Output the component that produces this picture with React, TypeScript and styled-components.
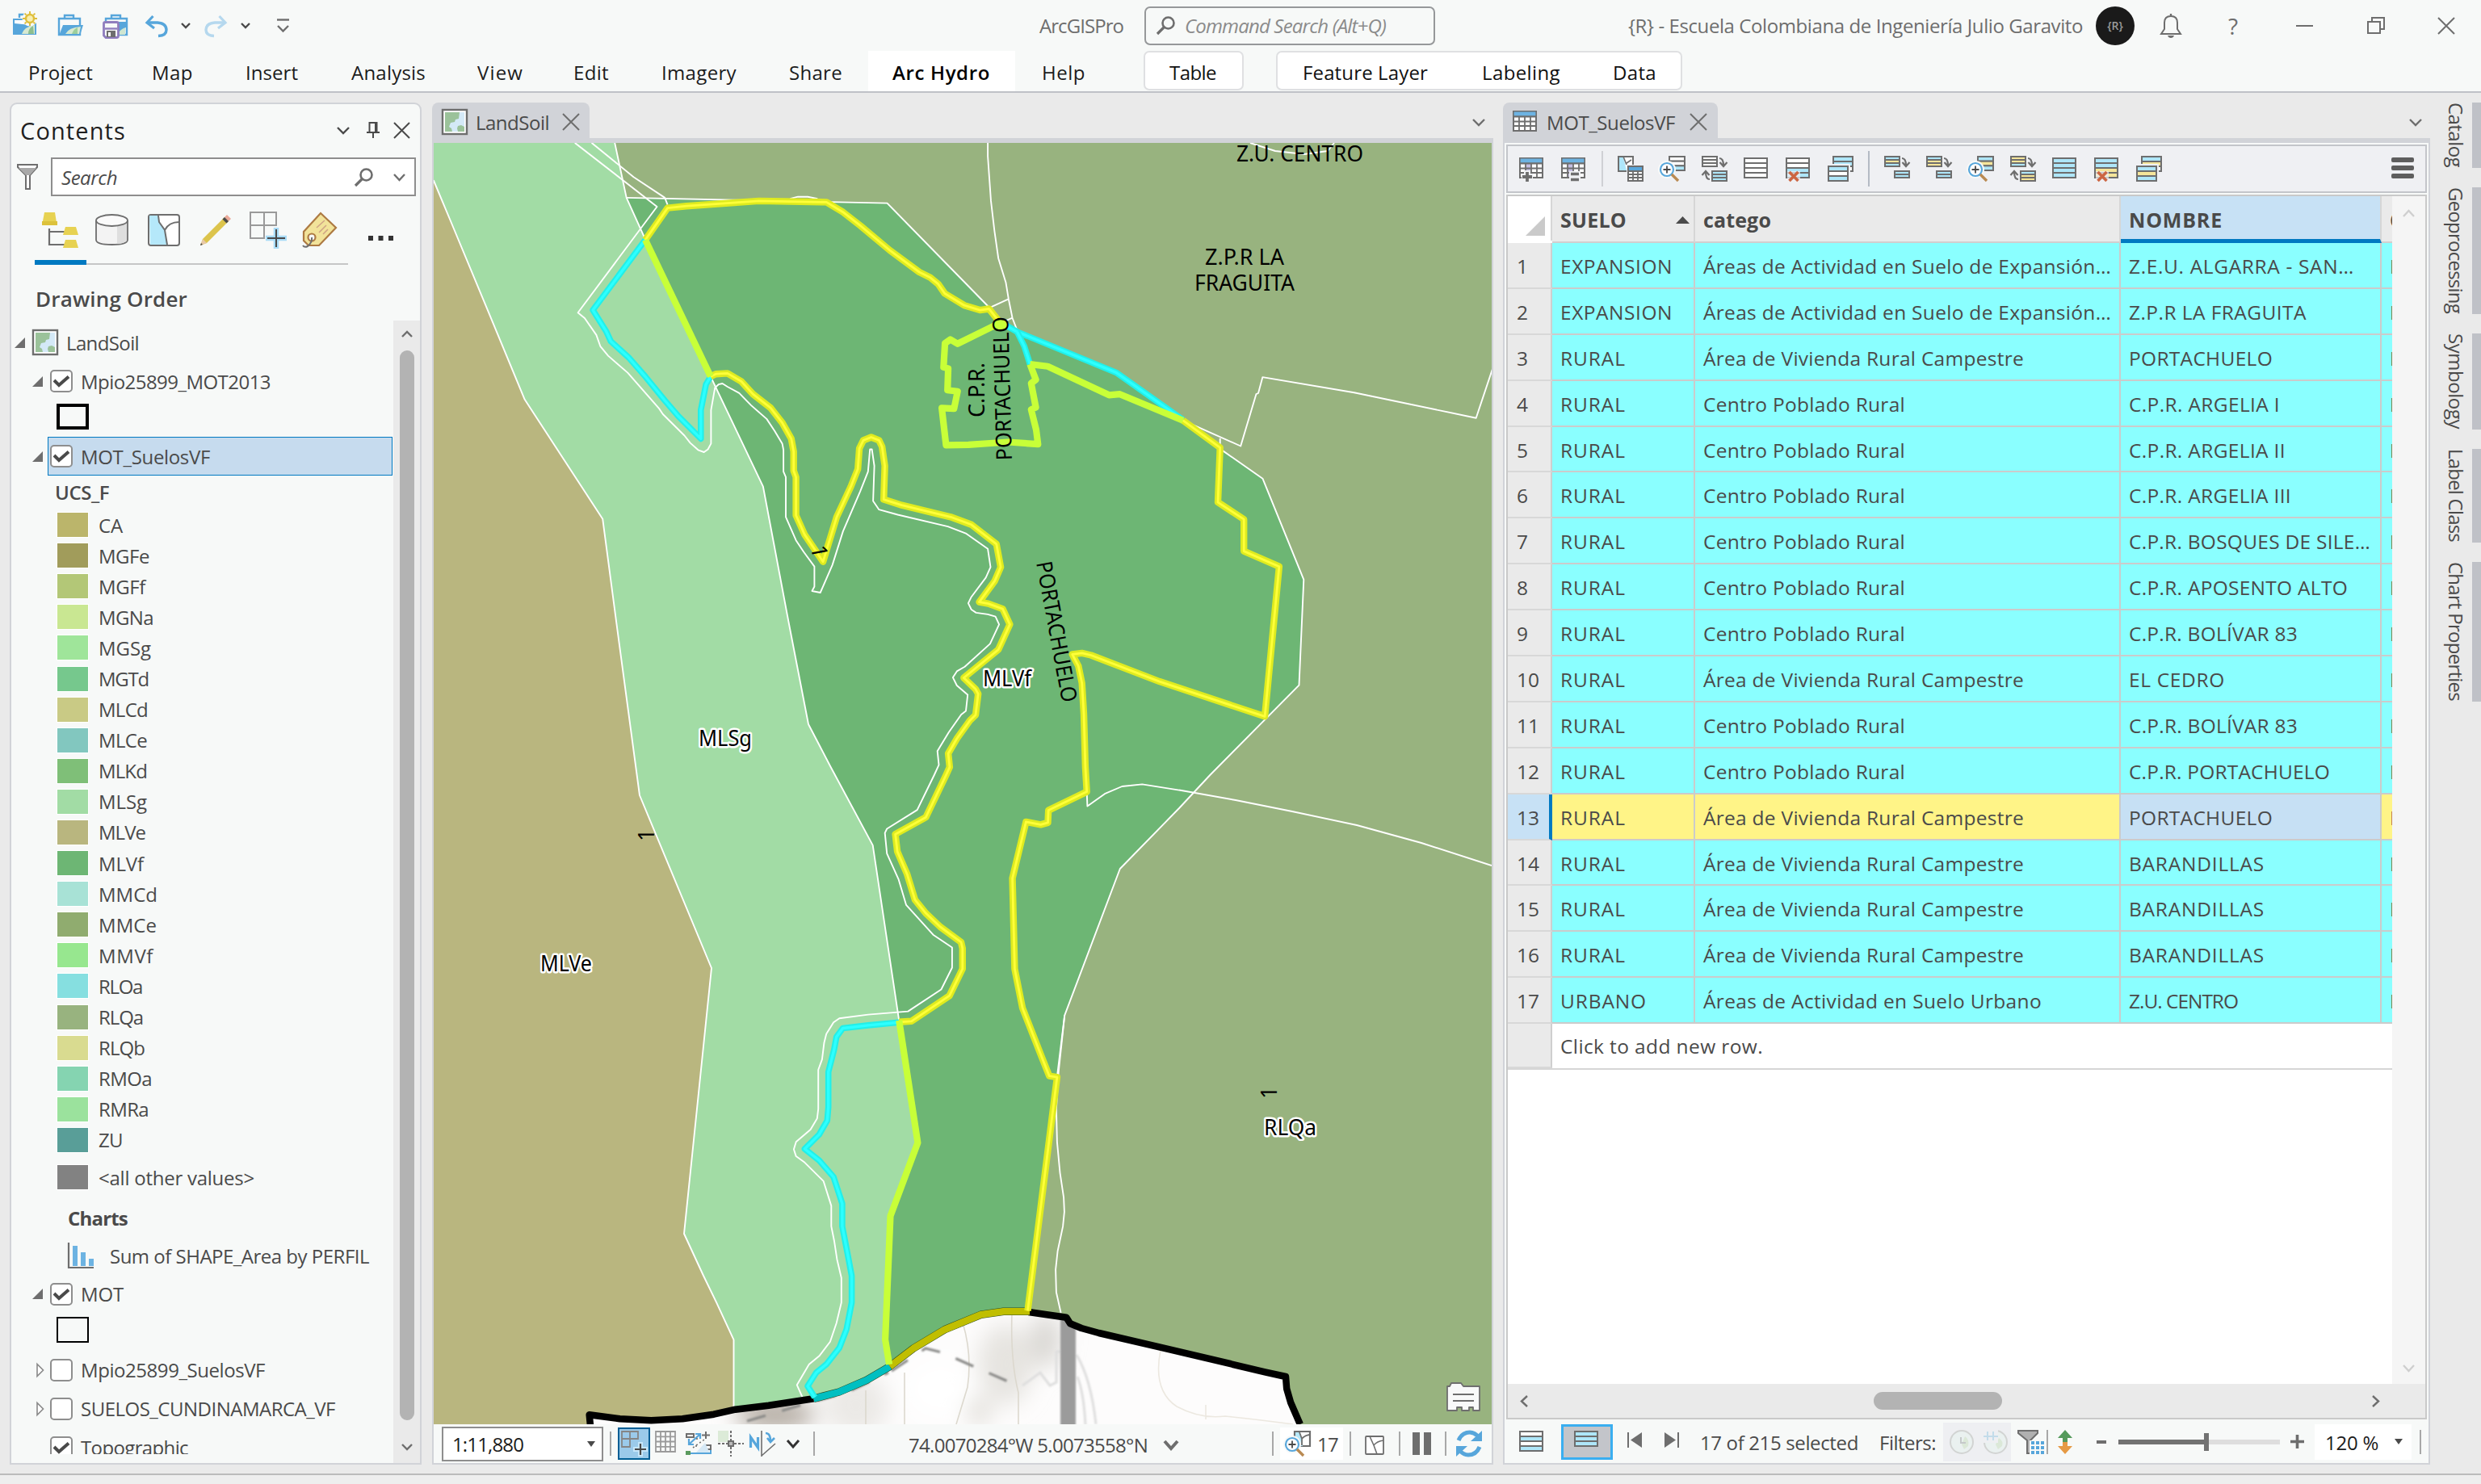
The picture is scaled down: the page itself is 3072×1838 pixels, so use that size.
import React, { useLayoutEffect, useRef } from "react";
import styled, { createGlobalStyle, css } from "styled-components";

const UI = `"Open Sans", "Noto Sans", sans-serif`;
const MAP_FONT = `"Noto Sans", "Open Sans", sans-serif`;
const INK = "#4a4a4a";
const GRAY = "#6e6e6e";
const EDGE = "#d1d3d8";
const PANEL = "#f7f9f8";

const GlobalStyle = createGlobalStyle`
  * { box-sizing: border-box; }
  body { margin: 0; background: #eaeaea; font-family: ${UI}; color: ${INK}; overflow: hidden; }
  svg { display: block; flex: none; overflow: visible; }
`;

/* ---------- fitted text ---------- */

const FitBox = styled.span<{ $w: number; $ml?: number; $vertical?: boolean; $size?: number; $weight?: number; $italic?: boolean; $color?: string; $dy?: number }>`
  flex: none;
  display: block;
  white-space: pre;
  ${(p) => (p.$vertical ? css`height: ${p.$w}px; writing-mode: vertical-rl;` : css`width: ${p.$w}px;`)}
  margin-left: ${(p) => p.$ml ?? 0}px;
  margin-top: ${(p) => p.$dy ?? 0}px;
  font-size: ${(p) => p.$size ?? 24}px;
  font-weight: ${(p) => p.$weight ?? 400};
  font-style: ${(p) => (p.$italic ? "italic" : "normal")};
  color: ${(p) => p.$color ?? "inherit"};
`;

type FitProps = {
  w: number; children: string; ml?: number; vertical?: boolean; size?: number;
  weight?: number; italic?: boolean; color?: string; dy?: number;
};

function Fit({ w, children, ml, vertical, size, weight, italic, color, dy }: FitProps) {
  const ref = useRef<HTMLSpanElement>(null);
  useLayoutEffect(() => {
    const el = ref.current;
    if (!el) return;
    el.style.letterSpacing = "0px";
    const r = el.getBoundingClientRect();
    const natural = vertical ? r.height : r.width;
    el.style.letterSpacing = `${(w - natural) / children.length}px`;
  }, [w, children, vertical]);
  return (
    <FitBox $w={w} $ml={ml} $vertical={vertical} $size={size} $weight={weight} $italic={italic} $color={color} $dy={dy}>
      <span ref={ref}>{children}</span>
    </FitBox>
  );
}

/* ---------- shell ---------- */

const Root = styled.div`
  width: 3072px; height: 1838px; display: flex; flex-direction: column; overflow: hidden; background: #eaeaea;
`;
const Header = styled.header`
  height: 115px; background: ${PANEL}; border-bottom: 2px solid #bfc1c7; display: flex; flex-direction: column; flex: none;
`;
const TitleBar = styled.div`
  height: 63px; display: flex; align-items: center; flex: none;
`;
const MenuBar = styled.nav`
  height: 50px; display: flex; align-items: stretch; color: #1c1c1c;
`;
const MenuItem = styled.div<{ $ml: number; $active?: boolean }>`
  margin-left: ${(p) => p.$ml}px; display: flex; align-items: center; padding-top: 3px;
  ${(p) => p.$active && css`background: #fff; padding-left: 30px; padding-right: 31px; color: #000;`}
`;
const MenuGroup = styled.div<{ $ml: number; $pad: string }>`
  margin-left: ${(p) => p.$ml}px; height: 49px; background: #fff; border: 2px solid #dfe0e2; border-radius: 7px;
  display: flex; align-items: center; padding: ${(p) => p.$pad}; color: #111;
`;
const At = styled.div<{ $ml: number; $mt?: number }>`
  margin-left: ${(p) => p.$ml}px; margin-top: ${(p) => p.$mt ?? 0}px; flex: none; display: flex; align-items: center;
`;
const CommandSearch = styled.div`
  margin-left: 26px; width: 360px; height: 48px; border: 2px solid #96989a; border-radius: 7px; display: flex; align-items: center;
  padding-left: 13px; flex: none;
`;
const Avatar = styled.div`
  margin-left: 16px; width: 48px; height: 48px; border-radius: 50%; background: #1a1a1a; color: #9a9a9a; font-size: 14px;
  display: flex; align-items: center; justify-content: center; flex: none; font-weight: 600;
`;
const Workspace = styled.main`
  height: 1710px; padding: 12px 0 0 12px; display: flex; align-items: flex-start; flex: none;
`;
const Footer = styled.footer`
  height: 13px; border-top: 2px solid #bcbcbc; background: #eeeeee;
`;

/* ---------- generic glyphs ---------- */

const Chevron = ({ w = 16, h = 8, c = GRAY, s = 2.4, dir = "down" }: { w?: number; h?: number; c?: string; s?: number; dir?: string }) => {
  const d =
    dir === "down" ? `M1 1L${w / 2} ${h - 1}L${w - 1} 1` :
    dir === "up" ? `M1 ${h - 1}L${w / 2} 1L${w - 1} ${h - 1}` :
    dir === "left" ? `M${w - 1} 1L1 ${h / 2}L${w - 1} ${h - 1}` : `M1 1L${w - 1} ${h / 2}L1 ${h - 1}`;
  return <svg width={w} height={h}><path d={d} fill="none" stroke={c} strokeWidth={s} /></svg>;
};
const Cross = ({ s = 20, c = GRAY, k = 2 }: { s?: number; c?: string; k?: number }) => (
  <svg width={s} height={s}><path d={`M0 0L${s} ${s}M${s} 0L0 ${s}`} stroke={c} strokeWidth={k} /></svg>
);
const Magnifier = ({ c = GRAY }: { c?: string }) => (
  <svg width="23" height="23"><circle cx="14.5" cy="8.5" r="7" fill="none" stroke={c} strokeWidth="2.6" /><path d="M9.5 13.5L1 22" stroke={c} strokeWidth="3.2" /></svg>
);
const MapThumb = () => (
  <svg width="32" height="32">
    <rect x="1" y="1" width="30" height="30" fill="#fff" stroke={GRAY} strokeWidth="2.4" />
    <rect x="4" y="4" width="24" height="24" fill="#9bc29a" />
    <path d="M22 4h6v18l-4-2-4 1-1 3 1 4h-7l-1-4-3-2 2-5 5-1 1-3 4-1z" fill="#d4e9f7" />
  </svg>
);

/* ---------- title bar icons ---------- */

const BLUE = "#57a6db";
const NewProject = () => (
  <svg width="32" height="32">
    <path d="M1 9h29v20H1z" fill={BLUE} /><path d="M3 11h20v6l-20-2z" fill="#fff" />
    <path d="M9 8V4h6" fill="none" stroke={BLUE} strokeWidth="2.4" />
    <path d="M12 28q3-9 16-11v11z" fill="#d7e9d0" /><path d="M20 28q0-7 6-10l1 10z" fill="#8dbf8f" />
    <circle cx="22" cy="9" r="9.5" fill={PANEL} /><circle cx="22" cy="9" r="5" fill="#f8eeb0" stroke="#dfbf3c" strokeWidth="2.4" />
    <path d="M22 0v3M22 15v3M13 9h3M28 9h3M15.6 2.6l2 2M26.4 13.4l2 2M28.4 2.6l-2 2M17.6 13.4l-2 2" stroke="#dfbf3c" strokeWidth="2" />
  </svg>
);
const OpenProject = () => (
  <svg width="32" height="28">
    <path d="M2 6h26v20H2z" fill={PANEL} stroke={BLUE} strokeWidth="2.4" /><path d="M9 6V2h11v4" fill="none" stroke={BLUE} strokeWidth="2.4" />
    <path d="M2 27L7 14h25l-4 13z" fill={BLUE} /><path d="M10 25q4-8 19-9l-2 9z" fill="#d7e9d0" /><path d="M18 25q2-6 7-8v8z" fill="#9ccf9c" />
  </svg>
);
const SaveProject = () => (
  <svg width="32" height="31">
    <path d="M4 6h26v20H4z" fill={PANEL} stroke={BLUE} strokeWidth="2.4" /><path d="M11 6V2h11v4" fill="none" stroke={BLUE} strokeWidth="2.4" />
    <path d="M18 10h10v16H18z" fill="#cfe6d0" /><path d="M20 10h9v7q-5 1-9 6z" fill={BLUE} />
    <path d="M1.5 12q0-1.5 2-1.5h14q2 0 2 2v15q0 2-2 2H4l-2.5-2.500z" fill={PANEL} stroke="#8f7dbd" strokeWidth="2.8" />
    <path d="M3 18.5h15" stroke="#8f7dbd" strokeWidth="2.4" /><path d="M5 21h11v8H5z" fill={GRAY} /><path d="M7 23h3v5H7z" fill="#fff" />
  </svg>
);
const Undo = ({ c, flip }: { c: string; flip?: boolean }) => (
  <svg width="28" height="27"><g transform={flip ? "translate(28 0) scale(-1 1)" : undefined}>
    <path d="M9.5 1L2 9l9 7" fill="none" stroke={c} strokeWidth="3.2" /><path d="M2 9h13q11 1 11 9 0 7-10 7.500" fill="none" stroke={c} strokeWidth="3.4" />
  </g></svg>
);
const Bell = () => (
  <svg width="26" height="32"><path d="M1 26h24l-4-6V12q0-8-8-8t-8 8v8z" fill="none" stroke={GRAY} strokeWidth="2" /><path d="M13 4V1" stroke={GRAY} strokeWidth="2.4" /><path d="M9 28h8q-1 3-4 3t-4-3z" fill={GRAY} /></svg>
);
const Restore = () => (
  <svg width="22" height="21"><path d="M1 6h15v14H1z" fill="none" stroke={GRAY} strokeWidth="2" /><path d="M6 6V1h15v14h-5" fill="none" stroke={GRAY} strokeWidth="2" /></svg>
);

function TopHeader() {
  return (
    <Header>
      <TitleBar>
        <At $ml={15} $mt={-4}><NewProject /></At>
        <At $ml={24} $mt={-2}><OpenProject /></At>
        <At $ml={24} $mt={1}><SaveProject /></At>
        <At $ml={21} $mt={2}><Undo c={BLUE} /></At>
        <At $ml={16}><Chevron w={12} h={7} c={INK} /></At>
        <At $ml={17} $mt={2}><Undo c="#b5d8ee" flip /></At>
        <At $ml={17}><Chevron w={12} h={7} c={INK} /></At>
        <At $ml={33}>
          <svg width="15" height="17"><path d="M0 1.5h15" stroke={GRAY} strokeWidth="2.4" /><path d="M1 9l6.5 6.500L14 9" fill="none" stroke={GRAY} strokeWidth="2.4" /></svg>
        </At>
        <Fit w={104} ml={929} color={GRAY}>ArcGISPro</Fit>
        <CommandSearch><Magnifier /><Fit w={249} ml={12} italic color="#8b8b8b">Command Search (Alt+Q)</Fit></CommandSearch>
        <Fit w={563} ml={239} color={GRAY}>{"{R} - Escuela Colombiana de Ingeniería Julio Garavito"}</Fit>
        <Avatar>{"{R}"}</Avatar>
        <At $ml={32}><Bell /></At>
        <Fit w={15} ml={58} size={28} color={GRAY}>?</Fit>
        <At $ml={69}><svg width="21" height="2"><rect width="21" height="2" fill={GRAY} /></svg></At>
        <At $ml={67}><Restore /></At>
        <At $ml={66}><Cross s={20} /></At>
      </TitleBar>
      <MenuBar>
        <MenuItem $ml={35}><Fit w={80}>Project</Fit></MenuItem>
        <MenuItem $ml={73}><Fit w={51}>Map</Fit></MenuItem>
        <MenuItem $ml={65}><Fit w={65}>Insert</Fit></MenuItem>
        <MenuItem $ml={66}><Fit w={92}>Analysis</Fit></MenuItem>
        <MenuItem $ml={64}><Fit w={57}>View</Fit></MenuItem>
        <MenuItem $ml={62}><Fit w={44}>Edit</Fit></MenuItem>
        <MenuItem $ml={65}><Fit w={93}>Imagery</Fit></MenuItem>
        <MenuItem $ml={65}><Fit w={66}>Share</Fit></MenuItem>
        <MenuItem $ml={32} $active><Fit w={121} weight={600}>Arc Hydro</Fit></MenuItem>
        <MenuItem $ml={33}><Fit w={54}>Help</Fit></MenuItem>
        <MenuGroup $ml={72} $pad="3px 32px 0 30px"><Fit w={58}>Table</Fit></MenuGroup>
        <MenuGroup $ml={40} $pad="3px 30px 0 31px">
          <Fit w={155}>Feature Layer</Fit><Fit w={97} ml={67}>Labeling</Fit><Fit w={54} ml={65}>Data</Fit>
        </MenuGroup>
      </MenuBar>
    </Header>
  );
}

/* ---------- contents pane ---------- */

const ContentsPane = styled.section`
  width: 510px; height: 1687px; background: ${PANEL}; border: 2px solid ${EDGE}; border-radius: 9px 9px 0 0; display: flex; flex-direction: column; flex: none;
`;
const PaneTitle = styled.div`height: 66px; padding-left: 11px; padding-bottom: 2px; display: flex; align-items: center; color: #1f1f1f; flex: none;`;
const SearchRow = styled.div`height: 48px; display: flex; align-items: center; padding-left: 7px; flex: none;`;
const SearchField = styled.div`
  margin-left: 16px; width: 452px; height: 48px; background: #fff; border: 2px solid #8e8e8e; display: flex; align-items: center; padding-left: 11px;
`;
const ViewIcons = styled.div`height: 79px; display: flex; align-items: flex-end; padding-left: 38px; padding-bottom: 15px; flex: none;`;
const ViewTabs = styled.div`
  margin-left: 29px; width: 388px; height: 6px; border-bottom: 2px solid #c6c6c6; flex: none; display: flex;
  &::before { content: ""; width: 64px; height: 6px; background: #0079c1; }
`;
const DrawingOrder = styled.div`height: 72px; padding: 12px 0 0 30px; display: flex; align-items: center; flex: none;`;
const TreeArea = styled.div`height: 1412px; display: flex; flex: none;`;
const Tree = styled.div`width: 473px; height: 1401px; overflow: hidden; flex: none;`;
const Row = styled.div<{ $h: number; $pl: number; $pb?: number }>`
  height: ${(p) => p.$h}px; padding-left: ${(p) => p.$pl}px; padding-bottom: ${(p) => p.$pb ?? 0}px; display: flex; align-items: center;
`;
const Selected = styled.div`
  margin-left: 6px; width: 427px; height: 48px; background: #c6dbee; border: 1px solid #0079c1; display: flex; align-items: center; padding-left: 2px;
`;
const Check = styled.span<{ $ml?: number }>`
  margin-left: ${(p) => p.$ml ?? 0}px; width: 28px; height: 28px; border: 2px solid #8e8e8e; border-radius: 5px; background: #fff; flex: none; display: flex; align-items: center; justify-content: center;
`;
const Swatch = styled.span<{ $c: string }>`
  width: 40px; height: 32px; border: 1px solid #fff; flex: none; background: ${(p) => p.$c}; background-clip: padding-box;
`;
const OutlineSwatch = styled.span<{ $b: number }>`width: 40px; height: 32px; border: ${(p) => p.$b}px solid #000; flex: none;`;
const VScroll = styled.div`
  width: 33px; height: 1415px; margin-top: -3px; background: #eaeaea; display: flex; flex-direction: column; align-items: center; flex: none;
`;
const VThumb = styled.div`width: 18px; height: 1325px; border-radius: 9px; background: #b3b3b3; margin: 16px 0 29px;`;

const Tick = () => <svg width="20" height="14"><path d="M1 6L7 12L19 1.5" fill="none" stroke={INK} strokeWidth="4" /></svg>;
const Open = () => <svg width="13" height="13"><path d="M13 0v13H0z" fill={GRAY} /></svg>;
const Closed = () => <svg width="9" height="18"><path d="M1 1.5v15L8.5 9z" fill="#fff" stroke="#8a8a8a" strokeWidth="1.6" /></svg>;

const LEGEND: [string, string, number][] = [
  ["CA", "#bbb56b", 30], ["MGFe", "#a19c5b", 63], ["MGFf", "#b3c777", 58], ["MGNa", "#c9e792", 68], ["MGSg", "#9fe59a", 65],
  ["MGTd", "#76c88d", 62], ["MLCd", "#c9ca85", 61], ["MLCe", "#82c7bf", 60], ["MLKd", "#7fbf78", 60], ["MLSg", "#a2dca5", 60],
  ["MLVe", "#b9b67f", 58], ["MLVf", "#6db674", 56], ["MMCd", "#a8e2d6", 73], ["MMCe", "#90ac6f", 72], ["MMVf", "#97e78f", 68],
  ["RLOa", "#86dfe0", 54], ["RLQa", "#98b37f", 55], ["RLQb", "#d9db90", 57], ["RMOa", "#85d4b1", 66], ["RMRa", "#9be29d", 62], ["ZU", "#599e98", 30],
];

const ContentIcons = () => (
  <ViewIcons>
    <svg width="46" height="44">
      <path d="M9 20v20h20M9 24h20" fill="none" stroke={GRAY} strokeWidth="2.2" />
      <path d="M3 0h13l2.5 16H0z" fill="#e7d252" /><path d="M0 11h19v5H0z" fill="#dcc23c" />
      <path d="M29 18h13l3 10H26zM29 34h13l3 10H26z" fill="#e7d252" />
    </svg>
    <At $ml={20}><svg width="41" height="44">
      <path d="M1 11v23q0 6 19.5 6T40 34V11z" fill="#f3f3f3" stroke={GRAY} strokeWidth="1.8" /><path d="M27 17l12-3v21q-4 4-12 4z" fill="#dedede" />
      <ellipse cx="20.5" cy="10" rx="19.5" ry="7" fill="#fafafa" stroke={GRAY} strokeWidth="1.8" />
    </svg></At>
    <At $ml={24}><svg width="40" height="44">
      <rect x="1" y="3" width="38" height="38" rx="3" fill="#fff" stroke={GRAY} strokeWidth="2" />
      <path d="M2 4h11l1 8 7 10 2 14 2 4H3z" fill="#b5e8fa" /><path d="M13 4l1 8 7 10 3 18M21 22q5-10 18-10" fill="none" stroke={GRAY} strokeWidth="2" />
    </svg></At>
    <At $ml={24}><svg width="40" height="44">
      <path d="M1 41l3-8L31 6l5 5L9 38z" fill="#dcc44c" /><path d="M1 41l3-8 5 5z" fill="#e8c9a8" /><path d="M1 41l1-3 2 2z" fill={INK} />
      <path d="M31 6l3-3 5 5-3 3z" fill="#eba999" /><path d="M28.5 8.5l2.5-2.5 5 5-2.500 2.500z" fill={INK} />
    </svg></At>
    <At $ml={22}><svg width="46" height="44">
      <path d="M1 0h32v16H1zM1 16h17v16H1zM18 0v32" fill="none" stroke="#9a9a9a" strokeWidth="2" />
      <path d="M33 19v26M20 32h26" stroke="#a9dcf7" strokeWidth="6.5" /><path d="M33 21v22M22 32h22" stroke={INK} strokeWidth="2" />
    </svg></At>
    <At $ml={19}><svg width="43" height="44">
      <path d="M23 1l19 18L21 41H8l-6-6V24z" fill="#f2e39a" stroke="#ad7a43" strokeWidth="2.2" /><path d="M18 19l10-9M21 25l9-9M26 27l6-6" stroke="#d0a585" strokeWidth="1.6" />
      <circle cx="12" cy="31" r="4.5" fill={PANEL} stroke="#ad7a43" strokeWidth="2.2" /><path d="M12 31q1 6-5 11-4 2-6-1" fill="none" stroke={GRAY} strokeWidth="2" />
    </svg></At>
    <At $ml={39}><svg width="31" height="22"><path d="M0 7h6v6H0zM12.5 7h6v6h-6zM25 7h6v6h-6z" fill="#333" /></svg></At>
  </ViewIcons>
);

function Contents() {
  return (
    <ContentsPane>
      <PaneTitle>
        <Fit w={131} size={29}>Contents</Fit>
        <At $ml={261}><Chevron w={16} h={9} c={INK} /></At>
        <At $ml={21}><svg width="16" height="20"><path d="M3.5 13V1h9v12M0 13h16M8 13v7M11 1v12" fill="none" stroke={INK} strokeWidth="2" /></svg></At>
        <At $ml={18}><Cross s={19} c={INK} /></At>
      </PaneTitle>
      <SearchRow>
        <svg width="26" height="32"><path d="M1 1h24v3L16 14v17h-5V14L1 4z" fill="#fff" stroke={GRAY} strokeWidth="2" /><path d="M2 5h22l-8 9h-5z" fill="#a9a9a9" /></svg>
        <SearchField><Fit w={69} italic>Search</Fit><At $ml={294}><Magnifier /></At><At $ml={25}><Chevron w={15} h={9} /></At></SearchField>
      </SearchRow>
      <ContentIcons />
      <ViewTabs />
      <DrawingOrder><Fit w={188} size={26} weight={600}>Drawing Order</Fit></DrawingOrder>
      <TreeArea>
        <Tree>
          <Row $h={48} $pl={4}><Open /><At $ml={9}><MapThumb /></At><Fit w={90} ml={10}>LandSoil</Fit></Row>
          <Row $h={48} $pl={26}><Open /><Check $ml={9}><Tick /></Check><Fit w={235} ml={10}>Mpio25899_MOT2013</Fit></Row>
          <Row $h={45} $pl={56} $pb={5}><OutlineSwatch $b={4} /></Row>
          <Row $h={48} $pl={26}><Open /><Selected><Check><Tick /></Check><Fit w={160} ml={10}>MOT_SuelosVF</Fit></Selected></Row>
          <Row $h={42} $pl={54} $pb={2}><Fit w={67} weight={600}>UCS_F</Fit></Row>
          {LEGEND.map(([name, c, w]) => (
            <Row key={name} $h={38.1} $pl={56}><Swatch $c={c} /><Fit w={w} ml={12}>{name}</Fit></Row>
          ))}
          <Row $h={54} $pl={56}><Swatch $c="#828282" /><Fit w={193} ml={12} dy={2}>{"<all other values>"}</Fit></Row>
          <Row $h={47} $pl={70}><Fit w={74} weight={700}>Charts</Fit></Row>
          <Row $h={47} $pl={70}>
            <svg width="32" height="32"><path d="M1 0v31h31" fill="none" stroke={GRAY} strokeWidth="2.2" /><path d="M6 4h6v25H6zM16 12h6v17h-6zM26 20h6v9h-6z" fill="#6db3e2" /></svg>
            <Fit w={321} ml={20}>Sum of SHAPE_Area by PERFIL</Fit>
          </Row>
          <Row $h={48} $pl={26}><Open /><Check $ml={9}><Tick /></Check><Fit w={53} ml={10}>MOT</Fit></Row>
          <Row $h={46} $pl={56} $pb={6}><OutlineSwatch $b={2} /></Row>
          <Row $h={48} $pl={31}><Closed /><Check $ml={8} /><Fit w={228} ml={10}>Mpio25899_SuelosVF</Fit></Row>
          <Row $h={48} $pl={31}><Closed /><Check $ml={8} /><Fit w={315} ml={10}>SUELOS_CUNDINAMARCA_VF</Fit></Row>
          <Row $h={48} $pl={48}><Check><Tick /></Check><Fit w={133} ml={10}>Topographic</Fit></Row>
        </Tree>
        <VScroll>
          <At $ml={0} $mt={13}><Chevron dir="up" w={14} h={8} /></At><VThumb /><Chevron w={14} h={8} />
        </VScroll>
      </TreeArea>
    </ContentsPane>
  );
}

/* ---------- map view ---------- */

type Pt = [number, number];
type Sheet = [number, number, number, number];
const NW: Sheet = [530, 150, 760 / 1568, 620 / 1568];
const NE: Sheet = [1150, 360, 700 / 1568, 600 / 1568];
const MID: Sheet = [900, 950, 560 / 1568, 800 / 1568];
const SW: Sheet = [530, 1580, 760 / 1568, 1 / 3];
const SE: Sheet = [1250, 1580, 620 / 1568, 1 / 3];
const ABS: Sheet = [0, 0, 1, 1];

/* Turns a sheet's flat "x y x y" list into map points. */
const on = (s: Sheet, list: string): Pt[] => {
  const n = list.trim().split(/[\s,]+/).map(Number);
  const out: Pt[] = [];
  for (let i = 0; i < n.length; i += 2) out.push([s[0] + n[i] * s[2], s[1] + n[i + 1] * s[3]]);
  return out;
};
const str = (...parts: Pt[][]) => parts.flat().map(([x, y]) => `${x.toFixed(1)},${y.toFixed(1)}`).join(" ");

const westEdge = [...on(NW, "14 185 60 320 155 600 247 872 446 1246 481 1568"), ...on(ABS, "792 985 881 1199 847 1528 871 1580"), ...on(SW, "737 100 781 238 781 495")];
const soilEdge = [...on(NW, "477 68 507 240 555 370 722 800 856 1145 921 1568"), ...on(ABS, "1001 897"), ...on(MID, "360 0 506 190 597 615 662 912 567 1088 549 1390 563 1450")];
const eastEdge = [...on(NW, "507 240 1173 257 1433 583 1462 632"), ...on(NE, "245 130 520 263 705 420 808 512 926 608 1040 935 1027 1277 780 1568"), ...on(MID, "1568 100 1363 247 1171 603 1145 752")];
const bottomW = on(SW, "412 517 490 532 570 538 650 532 730 515 785 497 870 482 985 457");
const bottomTeal = on(SW, "985 457 1050 432 1120 388 1180 337");
const bottomGold = on(SW, "1180 337 1240 270 1320 200 1412 145 1470 133 1537 133");
const bottomE = on(SE, "60 135 178 155 190 178 225 195 280 213 480 268 800 358 865 375 868 420 880 470 910 552");

const roadWest = [
  ...on(NW, "375 68 585 268 383 600 400 617 430 670 440 705 460 735 510 788 590 900 600 918 655 985 670 1008 690 1030 705 1037 715 1028 723 1010 723 905 733 835 742 825 752 822 765 832 795 852 825 890 865 933 885 970 905 1010 908 1030 908 1098 914 1115 914 1240 940 1313 960 1350 987 1395 987 1458 981 1472 1002 1477 1033 1390 1060 1285 1104 1160 1124 1098 1129 1028 1134 1028 1140 1080 1137 1190 1152 1217 1200 1233 1328 1270 1375 1292 1430 1340 1437 1397 1425 1430 1388 1490 1380 1510 1388 1530 1400 1540 1430 1545"),
  ...on(NE, "185 1055 195 1080 170 1143 100 1217 78 1232 67 1252 78 1278 108 1308 103 1360 90 1372 55 1430 24 1490 28 1535 15 1568"),
  ...on(MID, "660 104 555 150 548 160 555 210 595 272 622 335 715 407 781 438 781 487 743 540 628 593 490 601 390 610 370 620 345 648 337 670 330 710 317 735 317 830 313 853 290 880 240 910 232 928 240 945 270 960 335 1005 362 1065 362 1115 372 1150 382 1195 397 1240 397 1300 380 1350 358 1395 320 1430 285 1450 243 1500 262 1530"),
];
const whiteLines: Pt[][] = [
  westEdge, soilEdge, eastEdge, roadWest,
  on(NW, "418 68 525 175 605 240 612 262"),
  on(NW, "925 243 945 237 970 237 995 243"),
  on(NW, "1430 68 1430 110 1438 250 1447 345 1457 430 1476 505 1483 557 1493 617 1508 665"),
  on(NE, "165 57 220 28"), on(NE, "205 102 232 88"),
  on(NE, "705 420 865 503 908 335 914 332 926 280 1180 330 1518 412 1563 255"),
  on(NE, "808 478 808 510"),
  on(MID, "1248 60 1250 95 1310 65 1370 47 1440 42 1568 56"),
  on(ABS, "1460 978.5 1530 991 1600 1005 1680 1022 1760 1044 1847 1072"),
  on(MID, "1171 603 1150 740 1142 830 1145 910 1155 985 1168 1045 1170 1080 1165 1115 1147 1175 1140 1220 1142 1275 1158 1325"),
  on(ABS, "1548 177 1579 187 1615 191 1644 187 1652 177"),
];
const yellow: Pt[][] = [
  on(NW, "555 372 612 272 660 266 845 250 1018 254 1060 285 1105 328 1180 405 1255 473 1283 490 1303 510 1320 540 1370 577 1410 592 1433 588 1462 632"),
  [
    ...on(NW, "722 800 735 792 765 790 800 815 830 855 875 898 905 945 928 995 934 1035 934 1095 940 1115 940 1235 962 1295 1009 1380 1044 1240 1080 1145 1098 1090 1102 1025 1112 1000 1132 990 1152 1000 1160 1020 1167 1080 1164 1185 1210 1203 1335 1240 1388 1264 1452 1325 1463 1397 1448 1440"),
    ...on(NE, "140 1008 165 1013 205 1030 225 1080 193 1162 97 1253 130 1290 137 1305 130 1373 115 1390 78 1450 54 1498 58 1542 48 1568"),
    ...on(MID, "690 122 584 163 591 205 625 260 652 322 690 355 740 388 812 425 817 440 817 490 772 555 640 617 597 619"),
  ],
  [
    ...on(NE, "705 420 808 508 802 685 874 740 874 843 972 893 932 1378 640 1265 450 1180 425 1173 398 1177 415 1215 425 1270 430 1370"),
    ...on(MID, "1243 0 1248 60 1115 105 1113 135 1088 140 1037 133 990 270 998 490 1025 585 1095 710 1118 750 1145 753 1043 1320"),
  ],
];
const lime: Pt[][] = [
  on(NW, "555 372 722 800"),
  on(MID, "597 615 662 912 567 1090 549 1390 563 1450"),
  on(NE, "281 238 330 245 500 338 530 335 705 420"),
  on(NE, "200 103 80 172 60 158 45 170 41 248 54 252 52 322 80 326 70 382 36 380 48 500 110 499 220 490 303 497 298 450 284 385 297 378 284 300 297 288 281 238"),
];
const cyan: Pt[][] = [
  on(NW, "555 372 421 592 455 658 467 690 512 740 555 800 605 875 640 925 697 995 697 905 710 825 722 800"),
  on(MID, "597 620 490 627 402 634 380 655 372 685 352 740 352 825 348 858 320 892 270 927 320 955 370 995 400 1060 400 1115 418 1180 433 1235 433 1300 415 1365 390 1410 345 1450 310 1470 280 1503 305 1530"),
  on(NE, "200 103 245 133 520 265 705 418"),
  on(NE, "245 133 265 180 281 238"),
];

const Line = styled.polyline<{ $c: string; $w: number }>`
  fill: none; stroke: ${(p) => p.$c}; stroke-width: ${(p) => p.$w}px; stroke-linejoin: round; stroke-linecap: butt;
`;
const MapText = styled.text<{ $halo?: boolean }>`
  font-family: ${MAP_FONT}; font-size: 27px; fill: #000;
  ${(p) => p.$halo && css`stroke: #fff; stroke-width: 5px; paint-order: stroke; stroke-linejoin: round;`}
`;
const Canvas = styled.svg`&& { overflow: hidden; }`;
const GLYPHS = "spacingAndGlyphs" as const;

const MapCanvas = () => (
  <Canvas width="1310" height="1587" viewBox="537 177 1310 1587">
    <defs>
      <filter id="soft" x="-30%" y="-30%" width="160%" height="160%"><feGaussianBlur stdDeviation="14" /></filter>
      <filter id="faint"><feGaussianBlur stdDeviation="1" /></filter>
      <clipPath id="town"><polygon points={str(bottomW, bottomTeal, bottomGold, bottomE, on(ABS, "1610 1770 730 1770"))} /></clipPath>
    </defs>
    <rect x="537" y="177" width="1310" height="1587" fill="#98b37f" />
    <polygon points={str(on(ABS, "530 170"), on(NW, "477 68"), soilEdge, on(ABS, "1040 1764 537 1764"))} fill="#a2dca5" />
    <polygon points={str(westEdge, on(ABS, "909 1770 530 1770"))} fill="#b9b67f" />
    <polygon points={str(eastEdge, on(MID, "1043 1320 1150 1568 563 1568"), [...soilEdge].reverse().slice(0, -1))} fill="#6db674" />
    <g clipPath="url(#town)">
      <rect x="700" y="1600" width="1000" height="170" fill="#fdfcfc" />
      <g filter="url(#soft)">
        <ellipse cx="960" cy="1752" rx="50" ry="20" fill="#b5ada4" /><ellipse cx="1060" cy="1740" rx="40" ry="40" fill="#ebe9e6" />
        <ellipse cx="1245" cy="1690" rx="34" ry="50" fill="#e6e4e0" /><ellipse cx="1295" cy="1660" rx="20" ry="34" fill="#dad8d4" />
        <ellipse cx="1165" cy="1720" rx="45" ry="38" fill="#ffffff" /><ellipse cx="1212" cy="1748" rx="14" ry="18" fill="#dfdcd6" />
      </g>
      <g fill="none" stroke="#dcd8ce" strokeWidth="1.6">
        <path d="M1072 1764V1722M1120 1764V1700M1192 1638q12 40 6 80l-14 46M1253 1625q-2 60 8 100v40" />
        <path d="M1437 1672q-10 50 20 70 30 16 60 12 40 4 84 10M1493 1740v18" stroke="#ece8e0" />
      </g>
      <g filter="url(#faint)">
        <path d="M1333 1678q18 30 24 86M1334 1705q8 20 10 60M1266 1716l22-16 12 16 8-4v-38h8" fill="none" stroke="#dedede" strokeWidth="3" />
        <path d="M1104 1698L1146 1670L1166 1675L1255 1714" fill="none" stroke="#8a8a88" strokeWidth="3.2" strokeDasharray="24 21" />
        <path d="M925 1760L1000 1738L1050 1724L1100 1700" fill="none" stroke="#8a8a88" strokeWidth="3.2" strokeDasharray="24 21" />
        <path d="M1313 1630h19v140h-19z" fill="#9b9b9b" />
      </g>
    </g>
    {whiteLines.map((l, i) => <Line key={i} points={str(l)} $c="#fff" $w={1.9} />)}
    <Line points={str(on(SW, "415 560"), bottomW)} $c="#000" $w={8.5} />
    <Line points={str(bottomTeal, bottomGold)} $c="#2a4a20" $w={9.5} />
    <Line points={str(bottomE)} $c="#000" $w={8.5} />
    <Line points={str(bottomTeal)} $c="#00bfc1" $w={8.5} />
    <Line points={str(bottomGold)} $c="#c0be00" $w={8.5} />
    {cyan.map((l, i) => <React.Fragment key={i}><Line points={str(l)} $c="#22efe8" $w={7.6} /><Line points={str(l)} $c="#2dffff" $w={3.4} /></React.Fragment>)}
    {yellow.map((l, i) => <React.Fragment key={i}><Line points={str(l)} $c="#dfeb1f" $w={8.4} /><Line points={str(l)} $c="#ffff3a" $w={2.8} /></React.Fragment>)}
    {lime.map((l, i) => <Line key={i} points={str(l)} $c="#c8ff38" $w={8.2} />)}
    <MapText x="1531" y="200" textLength="157" lengthAdjust={GLYPHS}>Z.U. CENTRO</MapText>
    <MapText x="1492" y="328" textLength="98" lengthAdjust={GLYPHS}>Z.P.R LA</MapText>
    <MapText x="1479" y="360" textLength="124" lengthAdjust={GLYPHS}>FRAGUITA</MapText>
    <MapText transform="translate(1219 517) rotate(-90)" textLength="68" lengthAdjust={GLYPHS}>C.P.R.</MapText>
    <circle cx="1239" cy="402" r="8" fill="#c8ff38" />
    <MapText transform="translate(1253 570) rotate(-91.5)" textLength="178" lengthAdjust={GLYPHS}>PORTACHUELO</MapText>
    <MapText transform="translate(1283 697) rotate(79.5)" textLength="177" lengthAdjust={GLYPHS}>PORTACHUELO</MapText>
    <MapText transform="translate(1004 677) rotate(80)">1</MapText>
    <MapText transform="translate(810 1042) rotate(-90)">1</MapText>
    <MapText transform="translate(1581 1361) rotate(-90)">1</MapText>
    <MapText $halo x="1217" y="850" textLength="60" lengthAdjust={GLYPHS}>MLVf</MapText>
    <MapText $halo x="865" y="924" textLength="66" lengthAdjust={GLYPHS}>MLSg</MapText>
    <MapText $halo x="669" y="1203" textLength="64" lengthAdjust={GLYPHS}>MLVe</MapText>
    <MapText $halo x="1565" y="1406" textLength="65" lengthAdjust={GLYPHS}>RLQa</MapText>
    <path d="M1792 1717h3l2-4h12l3 4h20v30h-8v-4h-5v4h-9v-4h-6v4h-12z" fill="#f8f9f9" stroke={GRAY} strokeWidth="1.8" strokeLinejoin="round" />
    <path d="M1799 1727h26M1799 1735h26" stroke={GRAY} strokeWidth="2" />
  </Canvas>
);

const View = styled.section<{ $w: number; $ml: number }>`
  width: ${(p) => p.$w}px; margin-left: ${(p) => p.$ml}px; height: 1687px; display: flex; flex-direction: column; flex: none;
`;
const TabStrip = styled.div`height: 50px; border-bottom: 6px solid ${EDGE}; display: flex; flex: none;`;
const Tab = styled.div<{ $w: number; $pl: number }>`
  width: ${(p) => p.$w}px; padding-left: ${(p) => p.$pl}px; height: 44px; background: ${EDGE}; border-radius: 8px 8px 0 0; display: flex; align-items: center; flex: none; padding-top: 4px;
`;
const TabMenu = styled.div<{ $ml: number }>`margin-left: ${(p) => p.$ml}px; margin-top: 20px;`;
const ViewBody = styled.div`
  flex: 1; border: 2px solid ${EDGE}; border-top: 0; background: ${PANEL}; display: flex; flex-direction: column;
`;
const StatusBar = styled.div`height: 48px; display: flex; align-items: center; flex: none;`;
const ScaleBox = styled.div`
  margin-left: 10px; width: 200px; height: 43px; border: 2px solid #8e8e8e; background: #fff; display: flex; align-items: center; padding-left: 11px; color: #1c1c1c;
`;
const Sep = styled.span<{ $ml: number; $h?: number; $c?: string }>`
  width: 2px; height: ${(p) => p.$h ?? 30}px; margin-left: ${(p) => p.$ml}px; background: ${(p) => p.$c ?? "#a8a8a8"}; flex: none;
`;
const ToggleOn = styled.div`
  margin-left: 8px; width: 40px; height: 40px; border: 2px solid #005e95; background: #9bcaea; display: flex; align-items: center; justify-content: center; flex: none;
`;
const WhiteBox = styled.div<{ $w: number; $h: number; $ml: number; $pl: number }>`
  margin-left: ${(p) => p.$ml}px; width: ${(p) => p.$w}px; height: ${(p) => p.$h}px; padding-left: ${(p) => p.$pl}px; background: #fff; display: flex; align-items: center; flex: none;
`;
const Down = () => <svg width="10" height="7"><path d="M0 0h10L5 7z" fill={INK} /></svg>;

const ZoomLens = () => (
  <g><circle cx="9" cy="17" r="11" fill={PANEL} /><circle cx="9" cy="17" r="8" fill="#fff" stroke={BLUE} strokeWidth="2.2" /><path d="M4.5 17h9M9 12.5v9" stroke={INK} strokeWidth="1.8" /><path d="M15 23l8 8" stroke="#b98a52" strokeWidth="3.4" /></g>
);

function MapView() {
  return (
    <View $w={1314} $ml={13}>
      <TabStrip>
        <Tab $w={195} $pl={12}><At $ml={0} $mt={-1}><MapThumb /></At><Fit w={91} ml={10}>LandSoil</Fit><At $ml={17} $mt={-1}><Cross s={20} /></At></Tab>
        <TabMenu $ml={1093}><Chevron w={16} h={9} /></TabMenu>
      </TabStrip>
      <ViewBody>
        <MapCanvas />
        <StatusBar>
          <ScaleBox><Fit w={88}>1:11,880</Fit><At $ml={79}><Down /></At></ScaleBox>
          <Sep $ml={8} />
          <ToggleOn><svg width="34" height="32"><path d="M2 1h20v9H2zM2 10h10v10H2zM12 1v19" fill="none" stroke="#858585" strokeWidth="1.8" /><path d="M25 14v18M16 23h18" stroke="#c6e6fa" strokeWidth="6" /><path d="M25 16v14M18 23h14" stroke={INK} strokeWidth="2.2" /></svg></ToggleOn>
          <At $ml={6} $mt={-6}><svg width="26" height="27"><path d="M1 1h24v25H1zM1 7.3h24M1 13.5h24M1 19.8h24M7 1v25M13 1v25M19 1v25" fill="none" stroke="#9b9b9b" strokeWidth="1.8" /></svg></At>
          <At $ml={12} $mt={-2}><svg width="32" height="29">
            <path d="M1 3h9v4H1zM23 17h8v5h-8z" fill="#fff" stroke={GRAY} strokeWidth="2" /><path d="M20 4.5h10M25 0v9" stroke={GRAY} strokeWidth="2" />
            <path d="M5 15L17 4M12 3h6v6M4 9v7h6" fill="none" stroke={BLUE} strokeWidth="2.2" /><path d="M12 27l12-13 6 13z" fill="#d5e8f5" /><path d="M3 27h28v-4" fill="none" stroke={BLUE} strokeWidth="2" />
            <path d="M0 24h6v5H0z" fill="#5a9a5e" /><path d="M9 20l14-10M14 8v3M13 17v3" stroke={GRAY} strokeWidth="1.6" strokeDasharray="2 3" />
          </svg></At>
          <At $ml={8}><svg width="32" height="32"><path d="M0 0h13v14H0z" fill="#dcebd8" /><path d="M16 0v32M0 16h32" stroke={GRAY} strokeWidth="2" strokeDasharray="3 2" /><path d="M13 13h6v6h-6z" fill="#bbb" stroke={GRAY} strokeWidth="2" /></svg></At>
          <At $ml={7}><svg width="32" height="32"><path d="M1.5 21V8L10.5 21V8" fill="none" stroke={BLUE} strokeWidth="3.2" /><path d="M15 0v32M15 31L32 16" fill="none" stroke={GRAY} strokeWidth="1.6" /><path d="M20 3q6 0 6 10M22 9l4 5 5-5" fill="none" stroke={BLUE} strokeWidth="2.6" /></svg></At>
          <At $ml={14}><Chevron w={16} h={10} c="#333" s={3} /></At>
          <Sep $ml={17} />
          <Fit w={296} ml={116} dy={3}>74.0070284°W 5.0073558°N</Fit>
          <At $ml={20} $mt={3}><Chevron w={18} h={11} s={4} /></At>
          <Sep $ml={116} />
          <WhiteBox $ml={8} $w={78} $h={40} $pl={6}>
            <svg width="32" height="32"><path d="M12 1h19v18H12z" fill="#fff" stroke={GRAY} strokeWidth="2.2" /><path d="M13 2h6l1 7 2 10h-9z" fill="#b5e8fa" /><path d="M18 2l3 8v8M21 10q3-4 9-5" fill="none" stroke={GRAY} strokeWidth="1.8" /><ZoomLens /></svg>
            <Fit w={26} ml={8}>17</Fit>
          </WhiteBox>
          <Sep $ml={8} />
          <At $ml={17} $mt={3}><svg width="24" height="24"><rect x="1" y="1" width="22" height="22" rx="1" fill="#fff" stroke={GRAY} strokeWidth="1.8" /><path d="M6 1l5 11 4 11M11 12q4-5 12-6" fill="none" stroke={GRAY} strokeWidth="1.6" /></svg></At>
          <Sep $ml={18} />
          <At $ml={15}><svg width="23" height="28"><path d="M0 0h9v28H0zM14 0h9v28h-9z" fill={GRAY} /></svg></At>
          <Sep $ml={17} />
          <At $ml={12}><svg width="32" height="32"><path d="M3 12Q7 2 17 2q6 0 11 6" fill="none" stroke={BLUE} strokeWidth="5" /><path d="M32 0v13H18z" fill={BLUE} /><path d="M29 20q-4 10-14 10-6 0-11-6" fill="none" stroke={BLUE} strokeWidth="5" /><path d="M0 32V19h14z" fill={BLUE} /></svg></At>
        </StatusBar>
      </ViewBody>
    </View>
  );
}

/* ---------- attribute table ---------- */

const A = "#aee6f9";
const Y = "#f5e59a";
const W = "#fff";
const Rows = ({ x = 1, y = 1, w = 28, h = 26, f }: { x?: number; y?: number; w?: number; h?: number; f: string[] }) => {
  const s = h / f.length;
  return (
    <g>
      {f.map((c, i) => <rect key={i} x={x} y={y + i * s} width={w} height={s} fill={c} stroke={GRAY} strokeWidth="2" />)}
    </g>
  );
};
const TableGlyph = ({ mark }: { mark?: string }) => (
  <svg width="30" height={mark ? 30 : 26}>
    <rect x="1" y="1" width="28" height="24" fill="#fff" stroke={GRAY} strokeWidth="2" /><path d="M1 1h28v6H1z" fill="#6db3e2" stroke={GRAY} strokeWidth="1.2" />
    {mark && <path d="M8 8h6v16H8z" fill="#c5bfe2" />}
    <path d="M1 7.5h28M1 13.5h28M1 19h28M8 7v18M15 7v18M22 7v18" stroke={GRAY} strokeWidth="1.8" />
    {mark === "plus" && <g><path d="M10 16v14M3 24h14" stroke="#eff0f3" strokeWidth="8" /><path d="M10 18v12M4 24h12" stroke={GRAY} strokeWidth="3.8" /></g>}
    {mark === "minus" && <g><path d="M10 17h14v14H10z" fill="#eff0f3" /><path d="M12 20.5h10M12 27.5h10" stroke={GRAY} strokeWidth="3.4" /></g>}
  </svg>
);
const CalcGlyph = () => (
  <svg width="32" height="32"><rect x="1" y="1" width="18" height="18" fill="#fff" stroke={GRAY} strokeWidth="2" /><path d="M2 2h5l2 8 2 8H2z" fill={A} /><path d="M7 1l4 10M11 9l6-4" stroke={GRAY} strokeWidth="1.6" />
    <rect x="11" y="11" width="21" height="21" fill="#eff0f3" /><rect x="13" y="13" width="18" height="18" fill="#fff" stroke={GRAY} strokeWidth="2" /><path d="M14 14h16v4H14z" fill="#57a6db" /><path d="M13 19h18M13 23h18M13 27h18M19 19v12M25 19v12" stroke={GRAY} strokeWidth="1.8" /></svg>
);
const ZoomRows = ({ f }: { f: string[] }) => <svg width="32" height="32"><Rows x={12} y={1} w={19} h={17} f={f} /><ZoomLens /></svg>;
const SwitchRows = ({ a, b, back }: { a: string[]; b: string[]; back?: boolean }) => (
  <svg width="32" height="32">
    <Rows x={1} y={1} w={18} h={12} f={a} />
    <path d="M22 3q5 0 5 9M22.5 8l4.5 5 4.5-5" fill="none" stroke={GRAY} strokeWidth="2.2" />
    {back ? <g><Rows x={13} y={19} w={18} h={12} f={b} /><path d="M10 29q-5 0-5-9M0.5 24L5 19l4.500 5" fill="none" stroke={GRAY} strokeWidth="2.2" /></g> : <Rows x={13} y={19} w={18} h={8} f={b} />}
  </svg>
);
const FullRows = ({ f, del }: { f: string[]; del?: boolean }) => (
  <svg width="30" height="30"><Rows y={3} h={24} f={f} />{del && <g><path d="M2 19h16v12H2z" fill="#eff0f3" opacity=".7" /><path d="M4.5 20l11 11M15.5 20l-11 11" stroke="#cc6642" strokeWidth="3.6" /></g>}</svg>
);
const StackRows = ({ c }: { c: string }) => (
  <svg width="32" height="32"><Rows x={7} y={1} w={24} h={18} f={[A, c === Y ? Y : A, W]} /><rect x="0" y="10" width="28" height="20" fill="#eff0f3" /><Rows x={1} y={13} w={24} h={18} f={[c === Y ? A : A, c === Y ? Y : W, A]} /></svg>
);

const Toolbar = styled.div`
  margin: 2px 2px 0; height: 60px; border: 2px solid #c3c5ca; background: #eff0f3; display: flex; align-items: center; flex: none; padding-left: 14px;
`;
const ToolSlot = styled.div<{ $w?: number }>`width: ${(p) => p.$w ?? 52}px; height: 32px; flex: none; padding-top: 0;`;
const GridBox = styled.div`
  margin: 2px 2px 0; height: 1517px; border: 2px solid #c9c9c9; background: #fff; display: flex; flex-direction: column; flex: none;
`;
const GridMain = styled.div`height: 1471px; display: flex; flex: none;`;
const Grid = styled.div`width: 1095px; overflow: hidden; flex: none;`;
const GridRow = styled.div`display: flex; height: 56.9px;`;
const HeadRow = styled.div`display: flex; height: 58px;`;
const Corner = styled.div`width: 55px; height: 55px; border-right: 2px solid #d6d6d6; padding: 25px 0 0 22px; background: #fff; flex: none;`;
const HeadCell = styled.div<{ $w: number; $on?: boolean }>`
  width: ${(p) => p.$w}px; height: 58px; flex: none; display: flex; align-items: center; padding-left: 10px; padding-top: ${(p) => (p.$on ? 5 : 2)}px; overflow: hidden;
  background: ${(p) => (p.$on ? "#c7e1f5" : "#eaeaea")}; border-right: 2px solid #d6d6d6;
  border-bottom: ${(p) => (p.$on ? "5px solid #0079c1" : "2px solid #d2cfcf")};
`;
const NumCell = styled.div<{ $on?: boolean }>`
  width: 55px; height: 100%; flex: none; background: ${(p) => (p.$on ? "#c7e1f5" : "#eaeaea")}; border-right: ${(p) => (p.$on ? "4px solid #0079c1" : "2px solid #cfcfcf")};
  border-bottom: 2px solid #d8d8d8; padding: 2px 0 0 11px; display: flex; align-items: center;
`;
const Cell = styled.div<{ $w: number; $c: string }>`
  width: ${(p) => p.$w}px; height: 100%; flex: none; background: ${(p) => p.$c}; border-right: 2px solid #cbcbcb; border-bottom: 2px solid #cbcbcb;
  padding: 2px 0 0 10px; display: flex; align-items: center; overflow: hidden;
`;
const AddRow = styled.div`height: 57px; display: flex; align-items: center; border-bottom: 2px solid #d6d6d6;`;
const GridVScroll = styled.div`width: 41px; background: #f5f5f5; display: flex; flex-direction: column; justify-content: space-between; align-items: center; padding: 17px 0 15px; flex: none;`;
const GridHScroll = styled.div`height: 42px; background: #eaeaea; display: flex; align-items: center; padding-left: 16px; flex: none;`;
const HThumb = styled.div`margin-left: 428px; width: 159px; height: 22px; border-radius: 11px; background: #b3b3b3;`;
const TableStatus = styled.div`height: 54px; display: flex; align-items: center; flex: none; padding-top: 1px;`;
const ViewToggle = styled.div`
  margin-left: 22px; width: 64px; height: 44px; background: #c3c5ca; border: 3px solid #3aaef0; display: flex; align-items: center; justify-content: center; flex: none;
`;
const DisabledGroup = styled.div`margin-left: 9px; width: 84px; height: 48px; background: #eeeff2; display: flex; align-items: center; padding-left: 8px; gap: 12px; flex: none;`;
const Track = styled.div`margin-left: 15px; width: 200px; height: 6px; background: linear-gradient(90deg, #727272 109px, #dedede 109px); flex: none; display: flex; align-items: center;`;
const Knob = styled.div`margin-left: 106px; width: 6px; height: 22px; background: #727272;`;

const AREAS = "Áreas de Actividad en Suelo de Expansión…";
const VIV = "Área de Vivienda Rural Campestre";
const CEN = "Centro Poblado Rural";
const widths: Record<string, number> = {
  EXPANSION: 139, RURAL: 81, URBANO: 107, [AREAS]: 505, [VIV]: 397, [CEN]: 250, "Áreas de Actividad en Suelo Urbano": 419,
  "Z.E.U. ALGARRA - SAN…": 279, "Z.P.R LA FRAGUITA": 220, PORTACHUELO: 178, "C.P.R. ARGELIA I": 187, "C.P.R. ARGELIA II": 194, "C.P.R. ARGELIA III": 201,
  "C.P.R. BOSQUES DE SILE…": 299, "C.P.R. APOSENTO ALTO": 271, "C.P.R. BOLÍVAR 83": 209, "EL CEDRO": 119, "C.P.R. PORTACHUELO": 249, BARANDILLAS: 168, "Z.U. CENTRO": 135,
};
const DATA: [string, string, string][] = [
  ["EXPANSION", AREAS, "Z.E.U. ALGARRA - SAN…"], ["EXPANSION", AREAS, "Z.P.R LA FRAGUITA"], ["RURAL", VIV, "PORTACHUELO"],
  ["RURAL", CEN, "C.P.R. ARGELIA I"], ["RURAL", CEN, "C.P.R. ARGELIA II"], ["RURAL", CEN, "C.P.R. ARGELIA III"], ["RURAL", CEN, "C.P.R. BOSQUES DE SILE…"],
  ["RURAL", CEN, "C.P.R. APOSENTO ALTO"], ["RURAL", CEN, "C.P.R. BOLÍVAR 83"], ["RURAL", VIV, "EL CEDRO"], ["RURAL", CEN, "C.P.R. BOLÍVAR 83"],
  ["RURAL", CEN, "C.P.R. PORTACHUELO"], ["RURAL", VIV, "PORTACHUELO"], ["RURAL", VIV, "BARANDILLAS"], ["RURAL", VIV, "BARANDILLAS"], ["RURAL", VIV, "BARANDILLAS"],
  ["URBANO", "Áreas de Actividad en Suelo Urbano", "Z.U. CENTRO"],
];

function TableView() {
  return (
    <View $w={1148} $ml={12}>
      <TabStrip>
        <Tab $w={266} $pl={12}><At $ml={0} $mt={-2}><TableGlyph /></At><Fit w={159} ml={12}>MOT_SuelosVF</Fit><At $ml={19} $mt={-1}><Cross s={20} /></At></Tab>
        <TabMenu $ml={856}><Chevron w={16} h={9} /></TabMenu>
      </TabStrip>
      <ViewBody>
        <Toolbar>
          <ToolSlot><At $ml={0} $mt={2}><TableGlyph mark="plus" /></At></ToolSlot>
          <ToolSlot $w={49}><At $ml={0} $mt={2}><TableGlyph mark="minus" /></At></ToolSlot>
          <Sep $ml={1} $h={44} $c="#cfd0d4" />
          <At $ml={18} />
          <ToolSlot><CalcGlyph /></ToolSlot>
          <ToolSlot><ZoomRows f={[W, W, A]} /></ToolSlot>
          <ToolSlot><SwitchRows a={[W, W, W]} b={[A, A, A]} back /></ToolSlot>
          <ToolSlot><FullRows f={[W, W, W, W]} /></ToolSlot>
          <ToolSlot><FullRows f={[W, W, A, A]} del /></ToolSlot>
          <ToolSlot $w={49}><StackRows c={A} /></ToolSlot>
          <Sep $ml={1} $h={44} $c="#b4bac4" />
          <At $ml={18} />
          <ToolSlot><SwitchRows a={[A, Y, A]} b={[A, A]} /></ToolSlot>
          <ToolSlot><SwitchRows a={[A, Y, Y]} b={[A, A]} /></ToolSlot>
          <ToolSlot><ZoomRows f={[A, Y, A]} /></ToolSlot>
          <ToolSlot><SwitchRows a={[Y, Y, A]} b={[A, Y, Y]} back /></ToolSlot>
          <ToolSlot><FullRows f={[A, A, A, A]} /></ToolSlot>
          <ToolSlot><FullRows f={[A, A, Y, Y]} del /></ToolSlot>
          <ToolSlot><StackRows c={Y} /></ToolSlot>
          <At $ml={264} $mt={-2}><svg width="28" height="26"><rect width="28" height="6" rx="2" fill="#5e5e5e" /><rect y="10" width="28" height="6" rx="2" fill="#5e5e5e" /><rect y="20" width="28" height="6" rx="2" fill="#5e5e5e" /></svg></At>
        </Toolbar>
        <GridBox>
          <GridMain>
            <Grid>
              <HeadRow>
                <Corner><svg width="24" height="24"><path d="M24 0v24H0z" fill="#cacaca" /></svg></Corner>
                <HeadCell $w={177}><Fit w={82} size={25} weight={700}>SUELO</Fit><At $ml={61}><svg width="17" height="9"><path d="M0 9L8.5 0 17 9z" fill={INK} /></svg></At></HeadCell>
                <HeadCell $w={527}><Fit w={84} size={25} weight={700}>catego</Fit></HeadCell>
                <HeadCell $w={323} $on><Fit w={116} size={25} weight={700}>NOMBRE</Fit></HeadCell>
                <HeadCell $w={323}><Fit w={18} size={25} weight={700}>C</Fit></HeadCell>
              </HeadRow>
              {DATA.map(([a, b, c], i) => {
                const current = i === 12;
                const bg = current ? "#fff487" : "#8affff";
                return (
                  <GridRow key={i}>
                    <NumCell $on={current}><Fit w={i > 8 ? 28 : 14} size={24.5}>{String(i + 1)}</Fit></NumCell>
                    <Cell $w={177} $c={bg}><Fit w={widths[a]} size={24.5}>{a}</Fit></Cell>
                    <Cell $w={527} $c={bg}><Fit w={widths[b]} size={24.5}>{b}</Fit></Cell>
                    <Cell $w={323} $c={current ? "#c6e0f4" : bg}><Fit w={widths[c]} size={24.5}>{c}</Fit></Cell>
                    <Cell $w={60} $c={bg}><Fit w={8} size={24.5}>I</Fit></Cell>
                  </GridRow>
                );
              })}
              <AddRow><NumCell /><Fit w={251} ml={10} size={24.5}>Click to add new row.</Fit></AddRow>
            </Grid>
            <GridVScroll><Chevron dir="up" w={15} h={9} c="#cfcfcf" /><Chevron w={15} h={9} c="#cfcfcf" /></GridVScroll>
          </GridMain>
          <GridHScroll>
            <Chevron dir="left" w={9} h={15} /><HThumb /><At $ml={458}><Chevron dir="right" w={9} h={15} /></At>
          </GridHScroll>
        </GridBox>
        <TableStatus>
          <At $ml={18} $mt={-1}><svg width="30" height="27"><Rows y={1} h={24} f={[W, A, W, A]} /></svg></At>
          <ViewToggle><At $ml={-2} $mt={-8}><svg width="30" height="20"><Rows y={1} h={18} f={[A, A, A]} /></svg></At></ViewToggle>
          <At $ml={18} $mt={-4}><svg width="19" height="19"><path d="M1 0v19" stroke={GRAY} strokeWidth="2" /><path d="M18 0v19L4 9.5z" fill={GRAY} /></svg></At>
          <At $ml={26} $mt={-4}><svg width="19" height="19"><path d="M18 0v19" stroke={GRAY} strokeWidth="2" /><path d="M1 0v19l14-9.500z" fill={GRAY} /></svg></At>
          <Fit w={196} ml={26} dy={1}>17 of 215 selected</Fit>
          <Fit w={70} ml={26} dy={1}>Filters:</Fit>
          <DisabledGroup>
            <svg width="30" height="30"><circle cx="15" cy="15" r="14" fill="#eaf1f0" stroke="#d2d4d3" strokeWidth="2" /><path d="M19 8q6 4 4 12l-5 4-3-6z" fill="#dbe8d8" /><path d="M14 9v7h6" fill="none" stroke="#c5c9ca" strokeWidth="2" /></svg>
            <svg width="30" height="30"><circle cx="15" cy="15" r="14" fill="#eaf1f0" stroke="#d2d4d3" strokeWidth="2" /><path d="M19 10q6 4 4 10l-5 4-3-6z" fill="#dbe8d8" /><path d="M0 0h18v16H0z" fill="#eeeff2" /><path d="M5 2v11M12 2v11M0 8h18" stroke="#c3dcea" strokeWidth="2" /></svg>
          </DisabledGroup>
          <At $ml={8}><svg width="34" height="30"><path d="M1 1h24v3L16 13v16h-4V13L1 4z" fill="#b0b0b0" stroke={GRAY} strokeWidth="2" /><path d="M15 13h18v17H15z" fill={PANEL} />
            <path d="M17 14h4v4h-4zM23 14h4v4h-4zM29 14h4v4h-4zM17 20h4v4h-4zM23 20h4v4h-4zM29 20h4v4h-4zM17 26h4v4h-4zM23 26h4v4h-4zM29 26h4v4h-4z" fill={BLUE} /></svg></At>
          <Sep $ml={2} />
          <At $ml={12}><svg width="18" height="30"><path d="M9 0l9 10h-6v5H6v-5H0z" fill="#559a5b" /><path d="M9 30l9-10h-6v-5H6v5H0z" fill="#e69a45" /></svg></At>
          <At $ml={30}><svg width="12" height="4"><path d="M0 0h12v4H0z" fill={GRAY} /></svg></At>
          <Track><Knob /></Track>
          <At $ml={13}><svg width="17" height="17"><path d="M0 8.5h17M8.5 0v17" stroke={GRAY} strokeWidth="3.6" /></svg></At>
          <WhiteBox $ml={13} $w={120} $h={44} $pl={13}><Fit w={66} color="#1c1c1c" dy={1}>120 %</Fit><At $ml={20}><Down /></At></WhiteBox>
          <Sep $ml={10} />
        </TableStatus>
      </ViewBody>
    </View>
  );
}

/* ---------- docked tabs ---------- */

const Dock = styled.aside`width: 63px; display: flex; flex-direction: column; gap: 24px; flex: none;`;
const DockTab = styled.div<{ $h: number }>`
  height: ${(p) => p.$h}px; border-right: 11px solid #bfc1c7; display: flex; padding: 0 0 0 16px; flex: none;
`;
const DOCK: [string, number][] = [["Catalog", 81], ["Geoprocessing", 157], ["Symbology", 119], ["Label Class", 116], ["Chart Properties", 173]];

export default function App() {
  return (
    <Root>
      <GlobalStyle />
      <TopHeader />
      <Workspace>
        <Contents />
        <MapView />
        <TableView />
        <Dock>{DOCK.map(([n, h]) => <DockTab key={n} $h={h}><Fit vertical w={h - 1}>{n}</Fit></DockTab>)}</Dock>
      </Workspace>
      <Footer />
    </Root>
  );
}
